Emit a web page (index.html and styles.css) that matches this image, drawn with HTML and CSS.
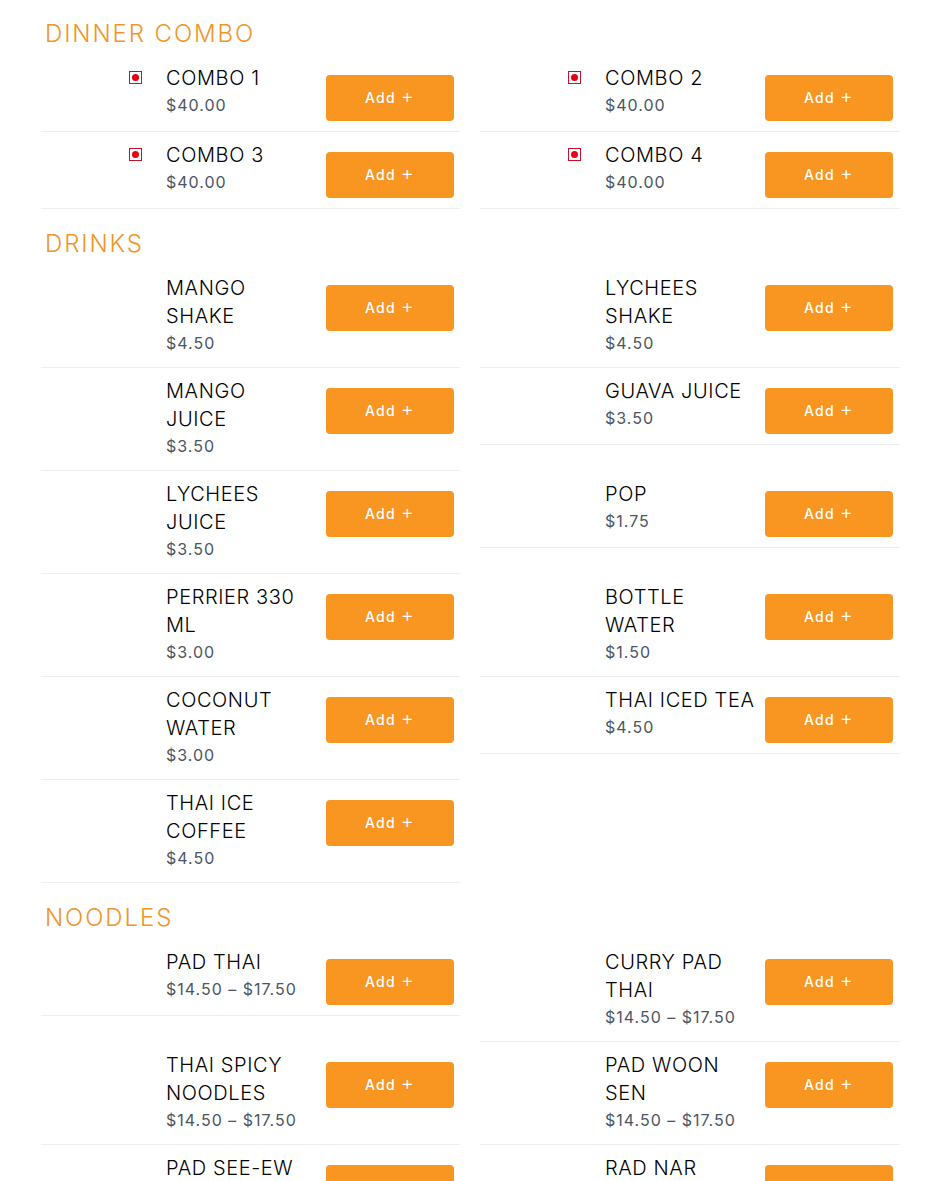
FILE: index.html
```html
<!DOCTYPE html>
<html lang="en">
<head>
<meta charset="utf-8">
<title>Menu</title>
<link rel="stylesheet" href="styles.css">
</head>
<body>
<main class="menu">
  <section class="section">
    <h2 class="section-title">DINNER COMBO</h2>
    <div class="items">
      <div class="item"><div class="thumb"><span class="mark"><i></i></span></div><div class="info"><h3 class="name">COMBO 1</h3><p class="price">$40.00</p></div><button class="add">Add <span class="plus">+</span></button></div>
      <div class="item"><div class="thumb"><span class="mark"><i></i></span></div><div class="info"><h3 class="name">COMBO 2</h3><p class="price">$40.00</p></div><button class="add">Add <span class="plus">+</span></button></div>
      <div class="item"><div class="thumb"><span class="mark"><i></i></span></div><div class="info"><h3 class="name">COMBO 3</h3><p class="price">$40.00</p></div><button class="add">Add <span class="plus">+</span></button></div>
      <div class="item"><div class="thumb"><span class="mark"><i></i></span></div><div class="info"><h3 class="name">COMBO 4</h3><p class="price">$40.00</p></div><button class="add">Add <span class="plus">+</span></button></div>
    </div>
  </section>
  <section class="section">
    <h2 class="section-title">DRINKS</h2>
    <div class="items">
      <div class="item"><div class="thumb"></div><div class="info"><h3 class="name">MANGO SHAKE</h3><p class="price">$4.50</p></div><button class="add">Add <span class="plus">+</span></button></div>
      <div class="item"><div class="thumb"></div><div class="info"><h3 class="name">LYCHEES SHAKE</h3><p class="price">$4.50</p></div><button class="add">Add <span class="plus">+</span></button></div>
      <div class="item"><div class="thumb"></div><div class="info"><h3 class="name">MANGO<br>JUICE</h3><p class="price">$3.50</p></div><button class="add">Add <span class="plus">+</span></button></div>
      <div class="item"><div class="thumb"></div><div class="info"><h3 class="name">GUAVA JUICE</h3><p class="price">$3.50</p></div><button class="add">Add <span class="plus">+</span></button></div>
      <div class="item"><div class="thumb"></div><div class="info"><h3 class="name">LYCHEES JUICE</h3><p class="price">$3.50</p></div><button class="add">Add <span class="plus">+</span></button></div>
      <div class="item"><div class="thumb"></div><div class="info"><h3 class="name">POP</h3><p class="price">$1.75</p></div><button class="add">Add <span class="plus">+</span></button></div>
      <div class="item"><div class="thumb"></div><div class="info"><h3 class="name">PERRIER 330 ML</h3><p class="price">$3.00</p></div><button class="add">Add <span class="plus">+</span></button></div>
      <div class="item"><div class="thumb"></div><div class="info"><h3 class="name">BOTTLE WATER</h3><p class="price">$1.50</p></div><button class="add">Add <span class="plus">+</span></button></div>
      <div class="item"><div class="thumb"></div><div class="info"><h3 class="name">COCONUT WATER</h3><p class="price">$3.00</p></div><button class="add">Add <span class="plus">+</span></button></div>
      <div class="item"><div class="thumb"></div><div class="info"><h3 class="name">THAI ICED TEA</h3><p class="price">$4.50</p></div><button class="add">Add <span class="plus">+</span></button></div>
      <div class="item"><div class="thumb"></div><div class="info"><h3 class="name">THAI ICE COFFEE</h3><p class="price">$4.50</p></div><button class="add">Add <span class="plus">+</span></button></div>
    </div>
  </section>
  <section class="section">
    <h2 class="section-title">NOODLES</h2>
    <div class="items">
      <div class="item"><div class="thumb"></div><div class="info"><h3 class="name">PAD THAI</h3><p class="price">$14.50 – $17.50</p></div><button class="add">Add <span class="plus">+</span></button></div>
      <div class="item"><div class="thumb"></div><div class="info"><h3 class="name">CURRY PAD THAI</h3><p class="price">$14.50 – $17.50</p></div><button class="add">Add <span class="plus">+</span></button></div>
      <div class="item"><div class="thumb"></div><div class="info"><h3 class="name">THAI SPICY NOODLES</h3><p class="price">$14.50 – $17.50</p></div><button class="add">Add <span class="plus">+</span></button></div>
      <div class="item"><div class="thumb"></div><div class="info"><h3 class="name">PAD WOON SEN</h3><p class="price">$14.50 – $17.50</p></div><button class="add">Add <span class="plus">+</span></button></div>
      <div class="item"><div class="thumb"></div><div class="info"><h3 class="name">PAD SEE-EW</h3><p class="price">$14.50 – $17.50</p></div><button class="add">Add <span class="plus">+</span></button></div>
      <div class="item"><div class="thumb"></div><div class="info"><h3 class="name">RAD NAR</h3><p class="price">$14.50 – $17.50</p></div><button class="add">Add <span class="plus">+</span></button></div>
    </div>
  </section>
</main>
</body>
</html>
```
FILE: styles.css
```css
html, body { margin: 0; padding: 0; height: 1181px; overflow: hidden; background: #fff; }
body { font-family: "Inter", "Liberation Sans", sans-serif; color: #111; }
.menu { padding: 0 25px 0 41px; margin-top: -1px; }
.section-title { margin: 0; height: 56px; box-sizing: border-box; padding: 21px 0 0 4px; font-size: 24px; line-height: 28px; font-weight: 300; letter-spacing: 1.9px; color: #f0962a; }
.items { display: grid; grid-template-columns: 419px 420px; column-gap: 20px; align-items: start; }
.item { display: flex; align-items: flex-start; padding: 9px 0 10px; border-bottom: 1px solid #efefef; }
.thumb { width: 125px; flex: none; display: flex; justify-content: flex-end; padding-right: 24px; box-sizing: border-box; }
.mark { width: 13px; height: 13px; margin-top: 7px; box-sizing: border-box; border: 1px solid #c8102e; display: flex; align-items: center; justify-content: center; }
.mark i { width: 7px; height: 7px; border-radius: 50%; background: #e60012; }
.info { width: 160px; flex: none; }
.name { margin: 0; font-size: 20px; line-height: 28px; font-weight: 300; letter-spacing: 0.6px; color: #000; padding-right: 8px; }
.price { margin: 0; font-size: 16px; line-height: 27px; font-weight: 400; letter-spacing: 1px; color: #4b5563; white-space: nowrap; }
.add { width: 128px; height: 46px; margin-top: 11px; border: 0; border-radius: 4px; background: #f99521; color: #fff; font-family: inherit; font-size: 14px; font-weight: 500; letter-spacing: 1.2px; padding: 0 0 5px; }
.plus { font-size: 20px; font-weight: 300; line-height: 20px; }
```
